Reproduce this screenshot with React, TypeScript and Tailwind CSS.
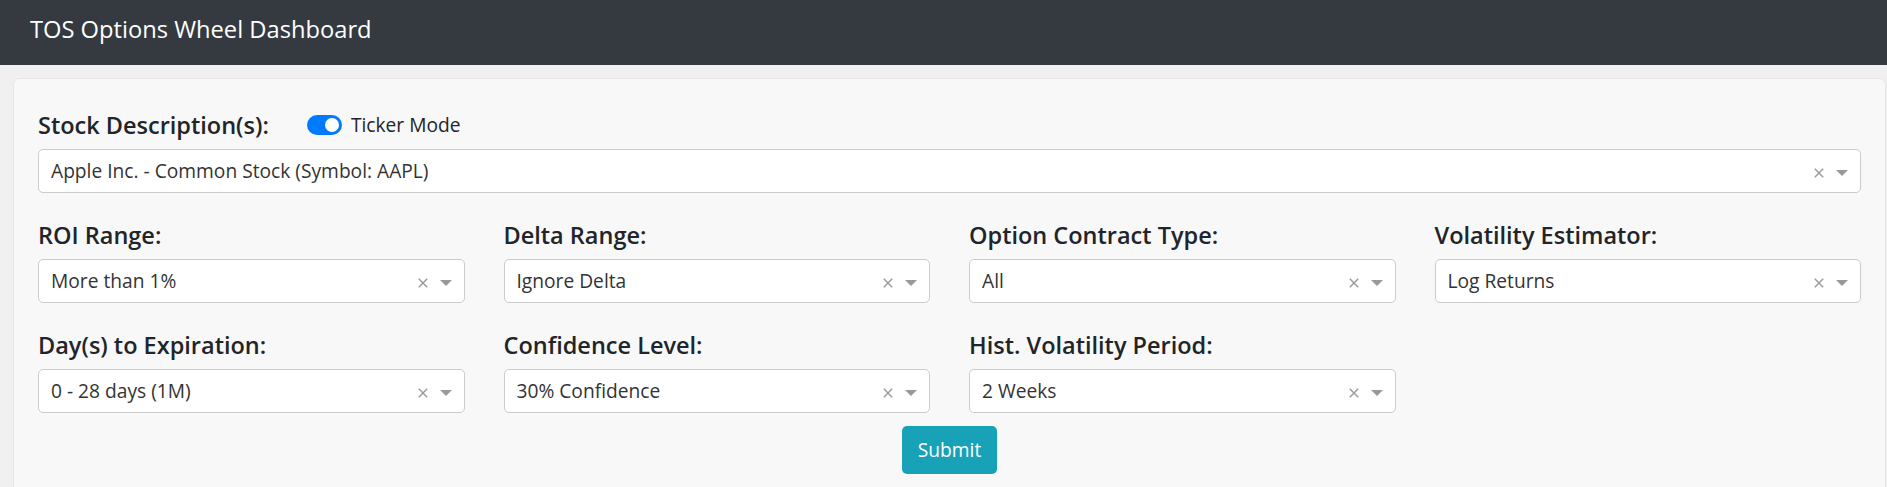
import React from "react";

function ClearIcon() {
  return (
    <svg width="10" height="10" viewBox="0 0 10 10" className="block">
      <path d="M0.8 0.8 L9.2 9.2 M9.2 0.8 L0.8 9.2" stroke="#999" strokeWidth="1.4" fill="none" />
    </svg>
  );
}

function Select({ value }: { value: string }) {
  return (
    <div className="flex h-[44px] items-center rounded-[5px] border border-[#ccc] bg-white pl-[12px] pr-[12px]">
      <span className="flex-1 truncate text-[19.2px] leading-[26px] text-[#333]">{value}</span>
      <span className="mt-[3px]">
        <ClearIcon />
      </span>
      <span className="ml-[12px] mt-[3px] h-0 w-0 border-x-[6px] border-t-[6px] border-x-transparent border-t-[#999]" />
    </div>
  );
}

function Field({ label, value }: { label: string; value: string }) {
  return (
    <div className="flex flex-col">
      <div className="mb-[9px] h-[30px] whitespace-nowrap text-[23.5px] font-semibold leading-[30px] text-[#212529]">{label}</div>
      <Select value={value} />
    </div>
  );
}

export default function App() {
  return (
    <div className="min-h-[487px] bg-[#f0f0f0] font-['Open_Sans','Noto_Sans',sans-serif]">
      <header className="h-[65px] bg-[#343a40] pl-[30px] pt-[14px]">
        <div className="text-[23.7px] leading-[30px] text-white">TOS Options Wheel Dashboard</div>
      </header>
      <div className="ml-[13px] mr-px mt-[13px] rounded-[6px] border border-[#e6e6e6] bg-[#f8f8f8] px-[24px] pb-[24px] pt-[31px]">
        <div className="flex h-[30px] items-center">
          <div className="whitespace-nowrap text-[23.5px] font-semibold leading-[30px] text-[#212529]">Stock Description(s):</div>
          <div className="ml-[38px] flex items-center">
            <span className="relative h-[20px] w-[35px] rounded-full bg-[#007bff]">
              <span className="absolute right-[3px] top-[3px] h-[14px] w-[14px] rounded-full bg-white" />
            </span>
            <span className="ml-[9px] text-[19.2px] leading-[26px] text-[#212529]">Ticker Mode</span>
          </div>
        </div>
        <div className="mt-[9px]">
          <Select value="Apple Inc. - Common Stock (Symbol: AAPL)" />
        </div>
        <div className="mt-[27px] grid grid-cols-4 gap-x-[39px] gap-y-[27px]">
          <Field label="ROI Range:" value="More than 1%" />
          <Field label="Delta Range:" value="Ignore Delta" />
          <Field label="Option Contract Type:" value="All" />
          <Field label="Volatility Estimator:" value="Log Returns" />
          <Field label="Day(s) to Expiration:" value="0 - 28 days (1M)" />
          <Field label="Confidence Level:" value="30% Confidence" />
          <Field label="Hist. Volatility Period:" value="2 Weeks" />
          <div />
        </div>
        <div className="mt-[13px] flex justify-center">
          <button className="flex h-[48px] w-[95px] items-center justify-center rounded-[5px] bg-[#17a2b8] text-[19.2px] text-white">
            Submit
          </button>
        </div>
      </div>
    </div>
  );
}
